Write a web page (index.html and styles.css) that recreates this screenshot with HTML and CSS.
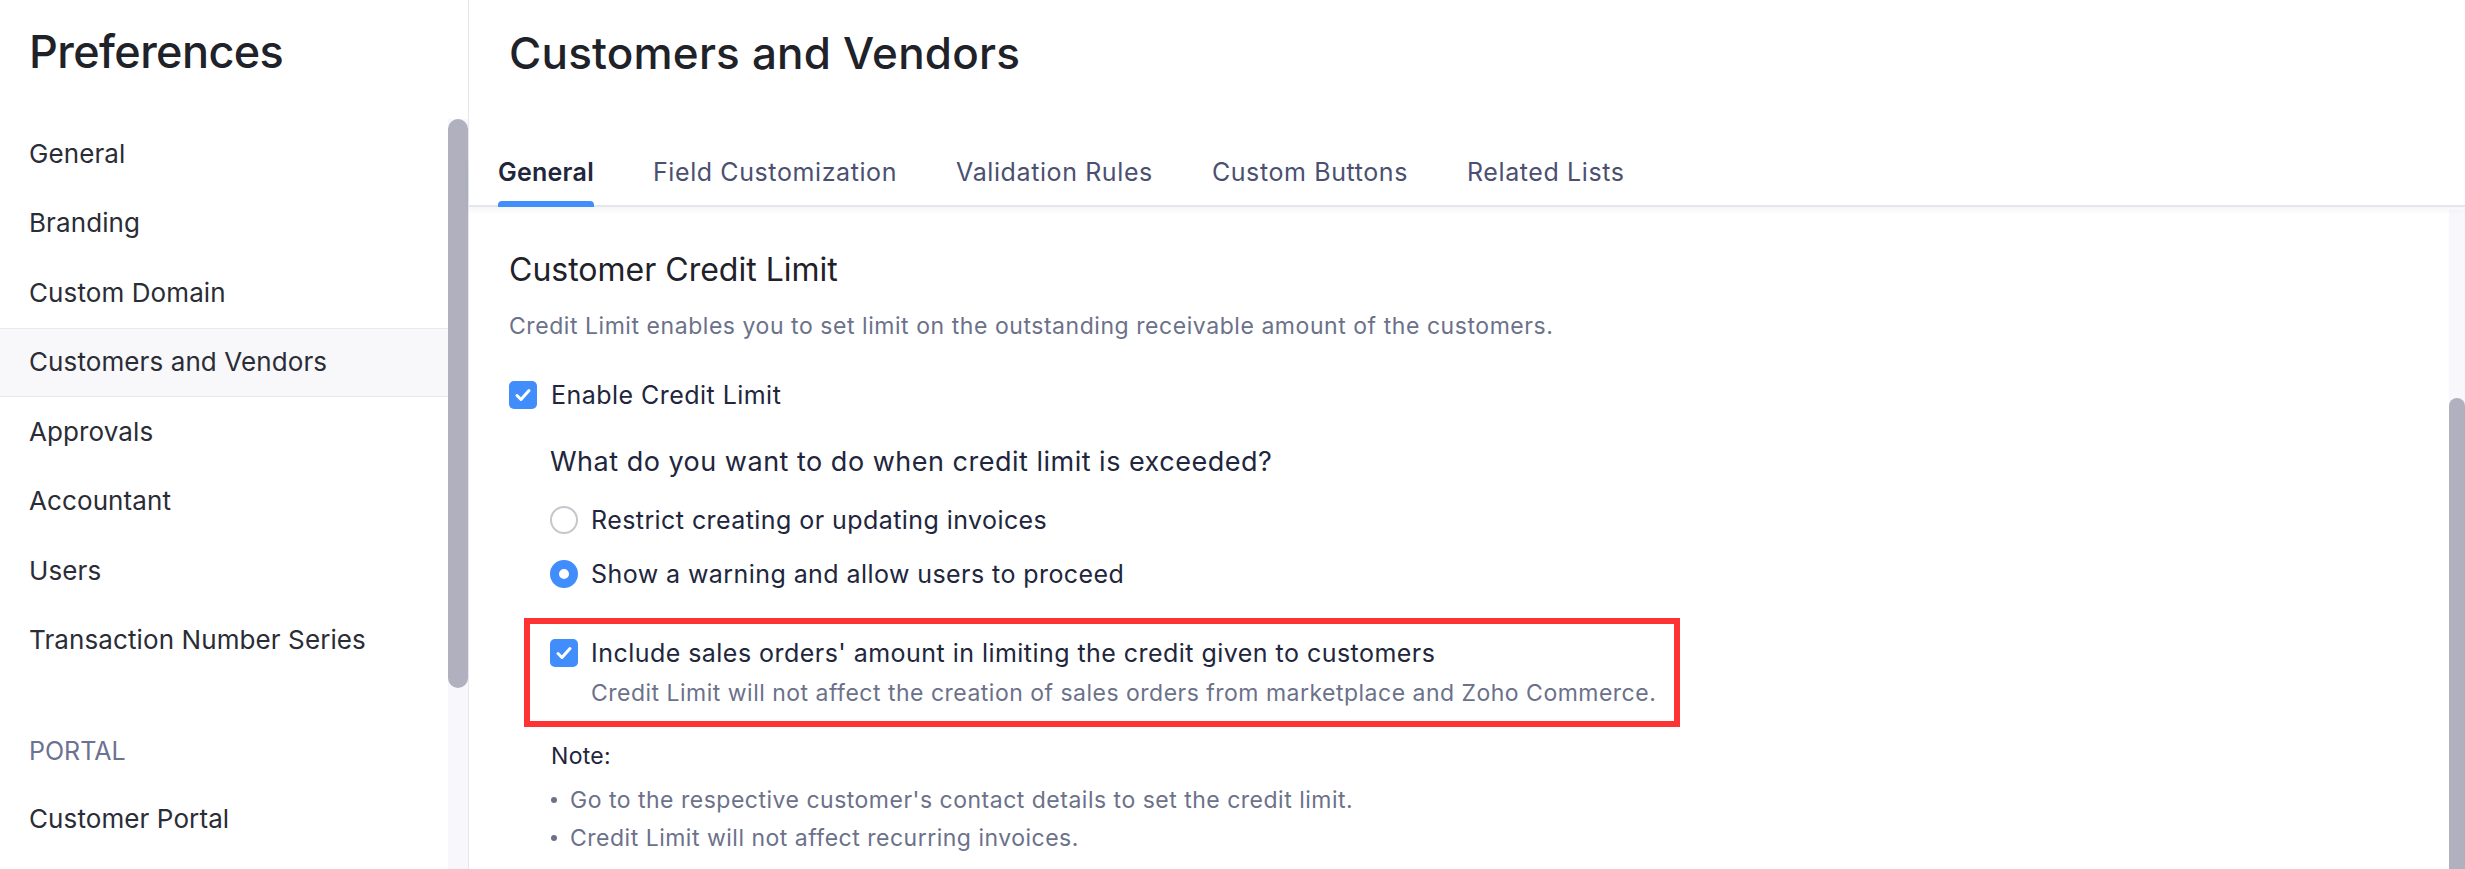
FILE: index.html
```html
<!DOCTYPE html>
<html lang="en">
<head>
<meta charset="utf-8">
<title>Preferences - Customers and Vendors</title>
<link rel="stylesheet" href="styles.css">
</head>
<body>
<div class="app">
  <aside class="sidebar">
    <div class="sidebar-head">Preferences</div>
    <div class="sidebar-body">
      <nav class="nav">
        <div class="nav-item">General</div>
        <div class="nav-item">Branding</div>
        <div class="nav-item">Custom Domain</div>
        <div class="nav-item active">Customers and Vendors</div>
        <div class="nav-item">Approvals</div>
        <div class="nav-item">Accountant</div>
        <div class="nav-item">Users</div>
        <div class="nav-item">Transaction Number Series</div>
        <div class="nav-group">PORTAL</div>
        <div class="nav-item">Customer Portal</div>
      </nav>
      <div class="side-track"><div class="side-thumb"></div></div>
    </div>
  </aside>
  <main class="main">
    <h1 class="page-title">Customers and Vendors</h1>
    <div class="tabs">
      <div class="tab active">General</div>
      <div class="tab">Field Customization</div>
      <div class="tab">Validation Rules</div>
      <div class="tab">Custom Buttons</div>
      <div class="tab">Related Lists</div>
    </div>
    <div class="content-wrap">
      <section class="content">
        <h2 class="section-title">Customer Credit Limit</h2>
        <p class="section-desc">Credit Limit enables you to set limit on the outstanding receivable amount of the customers.</p>
        <label class="check-row">
          <span class="checkbox"><svg viewBox="0 0 28 28" width="28" height="28"><path d="M8 14.5l4 4 8-9" fill="none" stroke="#fff" stroke-width="3" stroke-linecap="round" stroke-linejoin="round"/></svg></span>
          <span class="check-label">Enable Credit Limit</span>
        </label>
        <div class="sub">
          <div class="question">What do you want to do when credit limit is exceeded?</div>
          <div class="radio-row first">
            <span class="radio"></span>
            <span class="radio-label">Restrict creating or updating invoices</span>
          </div>
          <div class="radio-row second">
            <span class="radio on"></span>
            <span class="radio-label">Show a warning and allow users to proceed</span>
          </div>
        </div>
        <div class="highlight">
          <div class="check-row inner">
            <span class="checkbox"><svg viewBox="0 0 28 28" width="28" height="28"><path d="M8 14.5l4 4 8-9" fill="none" stroke="#fff" stroke-width="3" stroke-linecap="round" stroke-linejoin="round"/></svg></span>
            <span class="check-label">Include sales orders' amount in limiting the credit given to customers</span>
          </div>
          <div class="hint">Credit Limit will not affect the creation of sales orders from marketplace and Zoho Commerce.</div>
        </div>
        <div class="note">
          <div class="note-title">Note:</div>
          <ul class="note-list">
            <li>Go to the respective customer's contact details to set the credit limit.</li>
            <li>Credit Limit will not affect recurring invoices.</li>
          </ul>
        </div>
      </section>
      <div class="main-track"><div class="main-thumb"></div></div>
    </div>
  </main>
</div>
</body>
</html>
```
FILE: styles.css
```css
* { box-sizing: border-box; }
html, body {
  margin: 0;
  height: 100%;
  overflow: hidden;
  background: #fff;
  font-family: Inter, "Noto Sans", sans-serif;
  color: #21263c;
}
.app {
  display: flex;
  height: 869px;
}
.sidebar {
  width: 469px;
  flex: none;
  border-right: 1px solid #e6e6ec;
  display: flex;
  flex-direction: column;
}
.sidebar-head {
  height: 119px;
  padding: 25px 0 0 29px;
  font-size: 45px;
  line-height: 54px;
  font-weight: 500;
  color: #1f2229;
  letter-spacing: -0.6px;
}
.sidebar-body {
  flex: 1;
  display: flex;
  min-height: 0;
}
.nav {
  flex: 1;
}
.nav-item {
  font-size: 26px;
  line-height: 32px;
  padding: 17.5px 0 18px 29px;
  border-top: 1px solid transparent;
  border-bottom: 1px solid transparent;
  color: #2a2d36;
  letter-spacing: 0.1px;
}
.nav-item.active {
  background: #f8f8fb;
  border-top-color: #e8e8ef;
  border-bottom-color: #e8e8ef;
}
.nav-group {
  margin-top: 60px;
  margin-bottom: 17px;
  padding-left: 29px;
  font-size: 25px;
  line-height: 32px;
  color: #6c7292;
}
.side-track {
  width: 20px;
  flex: none;
  background: #f7f7fc;
}
.side-thumb {
  height: 569px;
  background: #b1b0bf;
  border-radius: 10px;
}
.main {
  flex: 1;
  display: flex;
  flex-direction: column;
  min-width: 0;
}
.page-title {
  margin: 26px 0 0 40px;
  font-size: 44px;
  line-height: 54px;
  font-weight: 500;
  color: #1f2229;
  letter-spacing: 0.2px;
}
.tabs {
  margin-top: 77px;
  display: flex;
  gap: 59px;
  padding-left: 29px;
  border-bottom: 2px solid #e3e6ec;
  box-shadow: 0 3px 6px rgba(30, 40, 60, 0.05);
  position: relative;
  z-index: 1;
}
.tab {
  position: relative;
  font-size: 25px;
  line-height: 30px;
  padding-bottom: 18px;
  color: #4b5071;
  letter-spacing: 0.6px;
}
.tab.active {
  font-weight: 600;
  color: #21263c;
  letter-spacing: 0.25px;
}
.tab.active::after {
  content: "";
  position: absolute;
  left: 0;
  right: 0;
  bottom: -2px;
  height: 6px;
  background: #408dfb;
  border-radius: 4px 4px 0 0;
}
.content-wrap {
  flex: 1;
  display: flex;
  min-height: 0;
}
.content {
  flex: 1;
  padding: 44px 0 0 40px;
}
.section-title {
  margin: 0;
  font-size: 32px;
  line-height: 38px;
  font-weight: 400;
  color: #1f2229;
}
.section-desc {
  margin: 23px 0 0;
  font-size: 23px;
  line-height: 28px;
  color: #6c718a;
  letter-spacing: 0.55px;
}
.check-row {
  display: flex;
  align-items: center;
  gap: 14px;
  margin-top: 39.5px;
  height: 30px;
}
.checkbox {
  width: 28px;
  height: 28px;
  flex: none;
  border-radius: 5px;
  background: #408dfb;
  display: block;
}
.checkbox svg { display: block; }
.check-label {
  font-size: 25px;
  line-height: 30px;
  color: #21263c;
  letter-spacing: 0.46px;
}
.sub {
  padding-left: 41px;
}
.question {
  margin-top: 36px;
  font-size: 27px;
  line-height: 32px;
  color: #21263c;
  letter-spacing: 0.5px;
}
.radio-row {
  display: flex;
  align-items: center;
  gap: 13px;
  height: 30px;
}
.radio-row.first { margin-top: 27px; }
.radio-row.second { margin-top: 24px; }
.radio {
  width: 28px;
  height: 28px;
  flex: none;
  border-radius: 50%;
  border: 2px solid #c6c6cc;
  background: #fff;
}
.radio.on {
  border: 9px solid #408dfb;
}
.radio-label {
  font-size: 25px;
  line-height: 30px;
  color: #21263c;
  letter-spacing: 0.43px;
}
.highlight {
  margin: 29px 0 0 15px;
  width: 1156px;
  border: 6px solid #fe3333;
  padding: 14px 0 14px 20px;
}
.check-row.inner {
  margin-top: 0;
  gap: 13px;
}
.hint {
  margin-top: 11px;
  padding-left: 41px;
  font-size: 23px;
  line-height: 28px;
  color: #6c718a;
  letter-spacing: 0.49px;
}
.note {
  padding-left: 42px;
  margin-top: 15px;
}
.note-title {
  font-size: 23px;
  line-height: 28px;
  color: #21263c;
  letter-spacing: 0.3px;
}
.note-list {
  list-style: none;
  margin: 11px 0 0;
  padding: 0;
  font-size: 23px;
  line-height: 38px;
  color: #6c718a;
  letter-spacing: 0.5px;
}
.note-list li {
  display: flex;
  align-items: center;
  gap: 13px;
}
.note-list li::before {
  content: "";
  width: 6px;
  height: 6px;
  flex: none;
  border-radius: 50%;
  background: #6c718a;
}
.main-track {
  width: 16px;
  flex: none;
  margin-top: 3px;
  background: #f7f7fc;
  padding-top: 188px;
}
.main-thumb {
  height: 100%;
  background: #b1b0bf;
  border-radius: 8px 8px 0 0;
}
```
